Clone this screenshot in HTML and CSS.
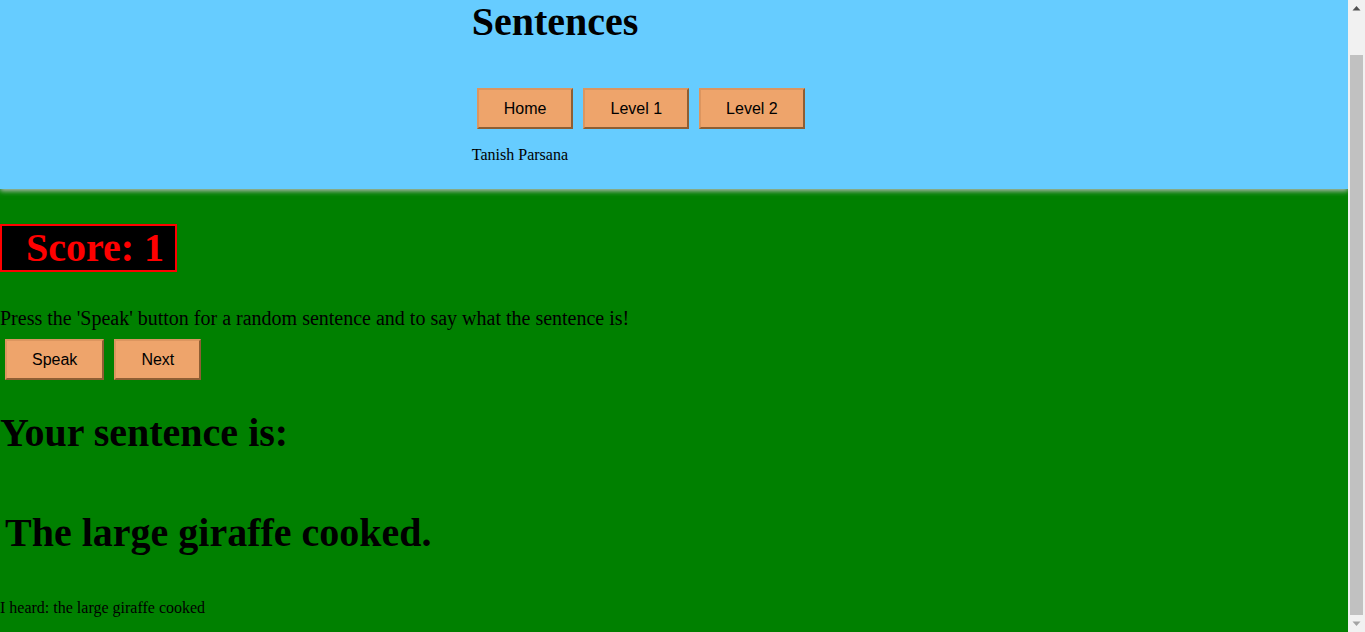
FILE: index.html
```html
<!DOCTYPE html>
<html lang="en">
<head>
<meta charset="utf-8">
<title>Sentences</title>
<link rel="stylesheet" href="styles.css">
</head>
<body>
<header class="top">
  <h1 class="title">Sentences</h1>
  <nav class="btn-row nav"><button class="btn">Home</button><button class="btn">Level 1</button><button class="btn">Level 2</button></nav>
  <p class="author">Tanish Parsana</p>
</header>
<main class="main">
  <div class="score">Score: 1</div>
  <p class="intro">Press the 'Speak' button for a random sentence and to say what the sentence is!</p>
  <div class="btn-row actions"><button class="btn">Speak</button><button class="btn">Next</button></div>
  <h1 class="big label">Your sentence is:</h1>
  <h1 class="big sentence">The large giraffe cooked.</h1>
  <p class="heard">I heard: the large giraffe cooked</p>
</main>
<div class="scrollbar" aria-hidden="true">
  <svg class="sb-arrow sb-up" width="17" height="17" viewBox="0 0 17 17"><polygon points="4.5,10.5 12.5,10.5 8.5,6" fill="#505050"/></svg>
  <div class="sb-thumb"></div>
  <svg class="sb-arrow sb-down" width="17" height="17" viewBox="0 0 17 17"><polygon points="4.5,6.5 12.5,6.5 8.5,11" fill="#a3a3a3"/></svg>
</div>
<script src="script.js"></script>
</body>
</html>
```

FILE: styles.css
```css
html, body {
  margin: 0;
  padding: 0;
  background: #008000;
}
body {
  margin-right: 17px;
  font-family: "Liberation Serif", "Times New Roman", serif;
  color: #000;
}
.top {
  background: #66ccff;
  padding: 43px 0 25px 35%;
  box-shadow: 0 2px 5px #bbbbbb;
  position: relative;
  z-index: 1;
}
.title {
  margin: 0;
  font-size: 40px;
  line-height: 44px;
  font-weight: bold;
}
.btn-row {
  display: flex;
}
.nav {
  margin-top: 39px;
}
.btn {
  margin: 5px;
  height: 41px;
  box-sizing: border-box;
  padding: 0 25px;
  font-family: "Liberation Sans", Arial, sans-serif;
  font-size: 16px;
  color: #000;
  background: #eea46b;
  border: 2px solid;
  border-color: #dc955f #8e5e33 #8e5e33 #dc955f;
  cursor: pointer;
}
.author {
  margin: 12px 0 0;
  font-size: 16px;
  line-height: 18px;
}
.main {
  padding-bottom: 15px;
}
.score {
  width: fit-content;
  margin-top: 35px;
  background: #000;
  color: #ff0000;
  border: 2px solid #ff0000;
  font-size: 40px;
  font-weight: bold;
  line-height: 44px;
  padding: 0 11px 0 24px;
}
.intro {
  margin: 35px 0 0;
  font-size: 20px;
  line-height: 23px;
}
.actions {
  margin-top: 4px;
}
.big {
  font-size: 40px;
  line-height: 44px;
  font-weight: bold;
  margin: 0;
}
.label {
  margin-top: 26px;
}
.sentence {
  margin-top: 56px;
  padding-left: 5px;
}
.heard {
  margin: 44px 0 0;
  font-size: 16px;
  line-height: 18px;
}
.scrollbar {
  position: fixed;
  top: 0;
  right: 0;
  width: 17px;
  height: 100vh;
  background: #f1f1f1;
  z-index: 10;
}
.sb-arrow {
  position: absolute;
  left: 0;
  display: block;
}
.sb-up {
  top: 0;
}
.sb-down {
  bottom: 0;
}
.sb-thumb {
  position: absolute;
  left: 2px;
  right: 2px;
  top: 55px;
  bottom: 17px;
  background: #c1c1c1;
}
```

FILE: script.js
```js
window.scrollTo(0, document.documentElement.scrollHeight);
window.addEventListener('load', function () {
  window.scrollTo(0, document.documentElement.scrollHeight);
});
```
